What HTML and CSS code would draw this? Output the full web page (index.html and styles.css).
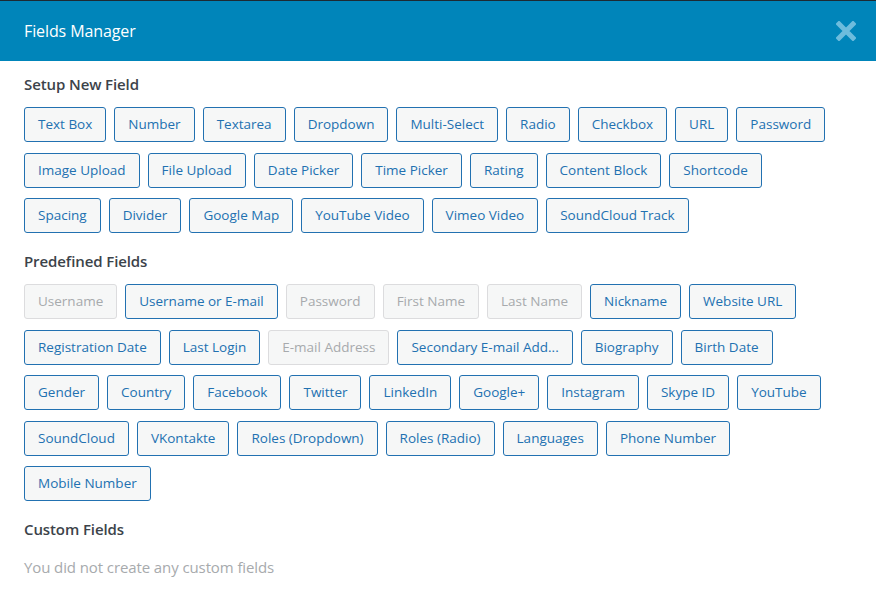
FILE: index.html
```html
<!DOCTYPE html>
<html>
<head>
<meta charset="utf-8">
<link rel="stylesheet" href="styles.css">
</head>
<body>
<div class="modal">
  <div class="topline"></div>
  <header class="head">
    <h1 class="title">Fields Manager</h1>
    <span class="close" aria-label="Close">
      <svg width="20" height="20" viewBox="0 0 20 20"><path d="M3 3 L17 17 M17 3 L3 17" stroke="#6dbcdd" stroke-width="5" stroke-linecap="square"/></svg>
    </span>
  </header>
  <main class="body">
    <h2 class="section">Setup New Field</h2>
    <div class="grid">
      <div class="row">
        <button class="btn">Text Box</button>
        <button class="btn">Number</button>
        <button class="btn">Textarea</button>
        <button class="btn">Dropdown</button>
        <button class="btn">Multi-Select</button>
        <button class="btn">Radio</button>
        <button class="btn">Checkbox</button>
        <button class="btn">URL</button>
        <button class="btn">Password</button>
      </div>
      <div class="row">
        <button class="btn">Image Upload</button>
        <button class="btn">File Upload</button>
        <button class="btn">Date Picker</button>
        <button class="btn">Time Picker</button>
        <button class="btn">Rating</button>
        <button class="btn">Content Block</button>
        <button class="btn">Shortcode</button>
      </div>
      <div class="row">
        <button class="btn">Spacing</button>
        <button class="btn">Divider</button>
        <button class="btn">Google Map</button>
        <button class="btn">YouTube Video</button>
        <button class="btn">Vimeo Video</button>
        <button class="btn">SoundCloud Track</button>
      </div>
    </div>
    <h2 class="section">Predefined Fields</h2>
    <div class="grid">
      <div class="row">
        <button class="btn off">Username</button>
        <button class="btn">Username or E-mail</button>
        <button class="btn off">Password</button>
        <button class="btn off">First Name</button>
        <button class="btn off">Last Name</button>
        <button class="btn">Nickname</button>
        <button class="btn">Website URL</button>
      </div>
      <div class="row">
        <button class="btn">Registration Date</button>
        <button class="btn">Last Login</button>
        <button class="btn off">E-mail Address</button>
        <button class="btn">Secondary E-mail Add...</button>
        <button class="btn">Biography</button>
        <button class="btn">Birth Date</button>
      </div>
      <div class="row">
        <button class="btn">Gender</button>
        <button class="btn">Country</button>
        <button class="btn">Facebook</button>
        <button class="btn">Twitter</button>
        <button class="btn">LinkedIn</button>
        <button class="btn">Google+</button>
        <button class="btn">Instagram</button>
        <button class="btn">Skype ID</button>
        <button class="btn">YouTube</button>
      </div>
      <div class="row">
        <button class="btn">SoundCloud</button>
        <button class="btn">VKontakte</button>
        <button class="btn">Roles (Dropdown)</button>
        <button class="btn">Roles (Radio)</button>
        <button class="btn">Languages</button>
        <button class="btn">Phone Number</button>
      </div>
      <div class="row">
        <button class="btn">Mobile Number</button>
      </div>
    </div>
    <h2 class="section">Custom Fields</h2>
    <p class="empty">You did not create any custom fields</p>
  </main>
</div>
</body>
</html>
```
FILE: styles.css
```css
html, body {
  margin: 0;
  padding: 0;
  background: #fff;
}
body {
  font-family: "Open Sans", "Noto Sans", sans-serif;
  width: 876px;
  height: 594px;
  overflow: hidden;
}
.modal {
  display: flex;
  flex-direction: column;
}
.topline {
  height: 1px;
  background: #1d2a33;
}
.head {
  height: 60px;
  background: #0085ba;
  display: flex;
  align-items: center;
  justify-content: space-between;
  padding: 0 20px 0 24px;
}
.title {
  margin: 0;
  font-size: 16px;
  font-weight: 400;
  color: #fff;
  letter-spacing: -0.1px;
}
.close {
  display: flex;
  width: 20px;
  height: 20px;
}
.body {
  padding: 13px 24px 0 24px;
}
.section {
  margin: 0 0 13px 0;
  font-size: 15px;
  line-height: 20px;
  font-weight: 600;
  color: #3c434a;
  letter-spacing: -0.1px;
}
.grid {
  display: flex;
  flex-direction: column;
  gap: 10.5px;
  margin-bottom: 18px;
}
.row {
  display: flex;
  gap: 8px;
}
.btn {
  height: 35px;
  padding: 0 13px;
  border: 1px solid #2271b1;
  border-radius: 3px;
  background: #f6f7f7;
  color: #2271b1;
  font-family: "Open Sans", "Noto Sans", sans-serif;
  font-size: 13.5px;
  letter-spacing: 0;
  line-height: 33px;
  white-space: nowrap;
  cursor: pointer;
}
.btn.off {
  border-color: #dcdcde;
  color: #a7aaad;
}
.empty {
  margin: 18px 0 0 0;
  font-size: 15px;
  line-height: 20px;
  color: #a7aaad;
  letter-spacing: -0.1px;
}
```
